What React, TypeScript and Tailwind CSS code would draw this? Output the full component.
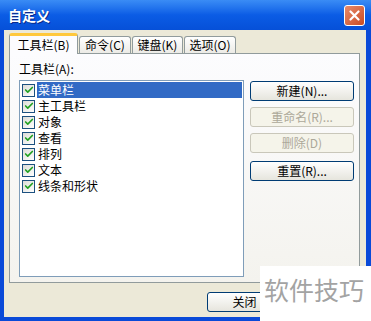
import { Check } from "lucide-react";

const font = "font-['SimSun','Noto_Sans_CJK_SC',sans-serif]";

const items = ["菜单栏", "主工具栏", "对象", "查看", "排列", "文本", "线条和形状"];

const XpButton = ({ label, disabled }: { label: string; disabled?: boolean }) => (
  <div
    className={`h-[20px] w-[104px] rounded-[3px] border flex items-center justify-center text-[12px] ${
      disabled
        ? "border-[#c9c7ba] bg-[#f5f4ea] text-[#aca899]"
        : "border-[#003c74] bg-gradient-to-b from-white to-[#e6e5dd] text-black"
    }`}
  >
    {label}
  </div>
);

export default function App() {
  return (
    <div className={`w-[371px] h-[321px] overflow-hidden relative flex flex-col bg-[#0a4ad8] ${font}`}>
      {/* title bar */}
      <div className="h-[30px] shrink-0 flex items-center justify-between pl-[8px] pr-[6px] bg-gradient-to-b from-[#3a8cf5] via-[#0b5ce5] to-[#0650d8]">
        <span className="text-white font-bold text-[14px] [text-shadow:1px_1px_#0a2a8a]">自定义</span>
        <div className="w-[21px] h-[21px] rounded-[3px] border border-white bg-gradient-to-br from-[#e88a6a] to-[#c94a1f] flex items-center justify-center">
          <svg width="11" height="11" viewBox="0 0 11 11">
            <path d="M1.5 1.5 L9.5 9.5 M9.5 1.5 L1.5 9.5" stroke="white" strokeWidth="2.2" strokeLinecap="round" />
          </svg>
        </div>
      </div>

      {/* client area */}
      <div className="flex-1 ml-[4px] mr-[5px] mb-[4px] bg-[#ece9d8] flex flex-col pl-[5px] pr-[6px] pt-[3px]">
        {/* tabs */}
        <div className="flex items-end h-[20px] text-[12px]">
          <div className="relative z-10 -mb-px h-[21px] w-[69px] border border-b-0 border-[#919b9c] rounded-t-[3px] bg-[#fcfcfe] flex items-center justify-center border-t-[3px] border-t-[#ffc83c]">
            工具栏(B)
          </div>
          <div className="h-[17px] w-[52px] ml-[1px] border border-b-0 border-[#919b9c] rounded-t-[3px] bg-gradient-to-b from-white to-[#ecebe6] flex items-center justify-center">
            命令(C)
          </div>
          <div className="h-[17px] w-[51px] ml-[1px] border border-b-0 border-[#919b9c] rounded-t-[3px] bg-gradient-to-b from-white to-[#ecebe6] flex items-center justify-center">
            键盘(K)
          </div>
          <div className="h-[17px] w-[52px] ml-[1px] border border-b-0 border-[#919b9c] rounded-t-[3px] bg-gradient-to-b from-white to-[#ecebe6] flex items-center justify-center">
            选项(O)
          </div>
        </div>

        {/* panel */}
        <div className="h-[230px] border border-[#919b9c] bg-gradient-to-b from-[#fcfcfe] to-[#f4f3ee] pl-[9px] pr-[5px] pt-[8px] flex flex-col">
          <div className="text-[12px] leading-[14px] h-[18px]">工具栏(A):</div>
          <div className="flex gap-[6px]">
            <div className="w-[226px] h-[197px] border border-[#7f9db9] bg-white pt-[1px] pl-[2px] pr-[1px]">
              {items.map((t, i) => (
                <div key={t} className="h-[16px] flex items-center">
                  <div className="w-[13px] h-[13px] border border-[#1c5180] bg-gradient-to-br from-[#dcdcd7] to-white flex items-center justify-center mr-[2px]">
                    <Check size={10} strokeWidth={4} className="text-[#21a121]" />
                  </div>
                  <div
                    className={`flex-1 h-[16px] text-[12px] leading-[16px] pl-[1px] ${
                      i === 0 ? "bg-[#316ac5] text-white" : "text-black"
                    }`}
                  >
                    {t}
                  </div>
                </div>
              ))}
            </div>
            <div className="flex flex-col gap-[6px] pt-[1px]">
              <XpButton label="新建(N)..." />
              <XpButton label="重命名(R)..." disabled />
              <XpButton label="删除(D)" disabled />
              <div className="mt-[2px]">
                <XpButton label="重置(R)..." />
              </div>
            </div>
          </div>
        </div>

        {/* bottom */}
        <div className="flex pl-[198px] pt-[9px]">
          <div className="h-[20px] w-[75px] rounded-[3px] border border-[#003c74] bg-gradient-to-b from-white to-[#e6e5dd] flex items-center justify-center text-[12px]">
            关闭
          </div>
        </div>
      </div>

      {/* watermark */}
      <div className="absolute left-[260px] top-[266px] w-[111px] h-[55px] bg-white flex items-center pl-[4px] pb-[8px]">
        <span className="whitespace-nowrap leading-none text-[#a3a3a3] text-[25px] font-['Noto_Sans_CJK_SC',sans-serif]">软件技巧</span>
      </div>
    </div>
  );
}
